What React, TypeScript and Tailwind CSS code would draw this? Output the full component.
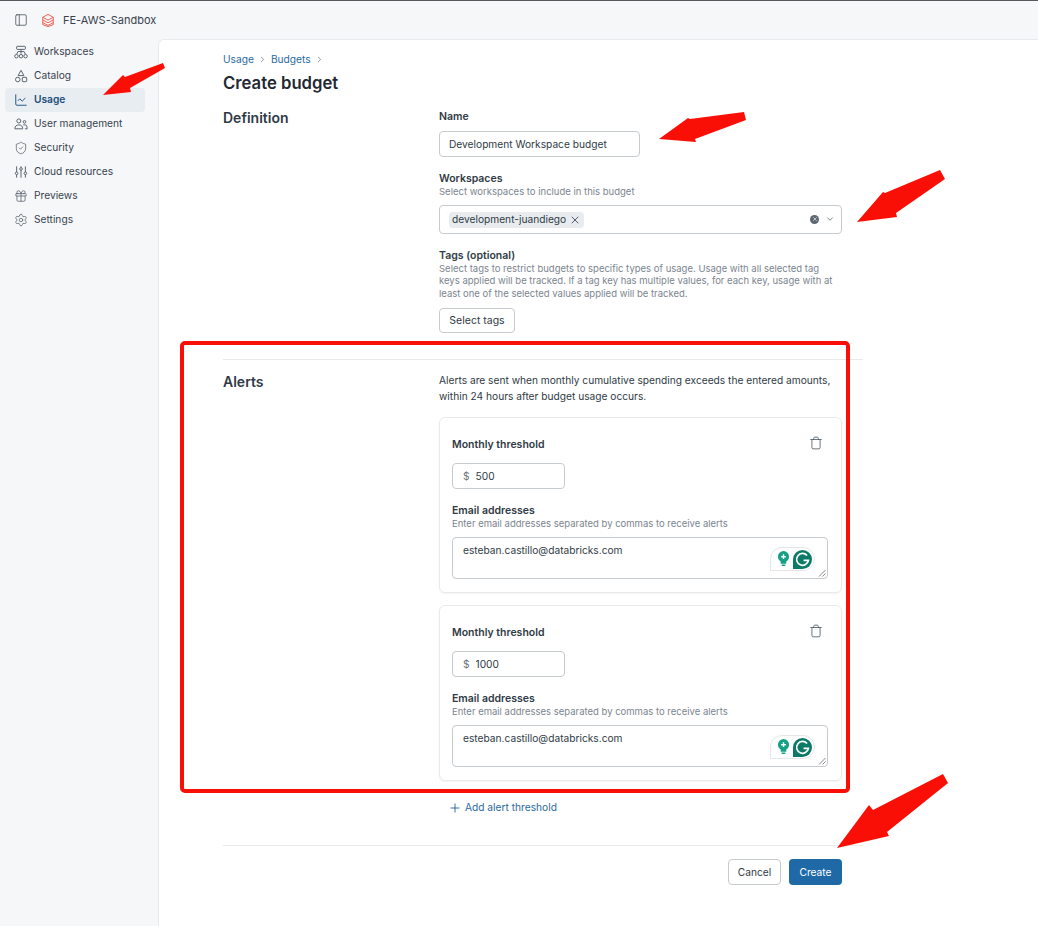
import type { ReactNode } from 'react'
import { ChevronDown, ChevronRight, Gift, LineChart, PanelLeft, Plus, Settings, ShieldCheck, Trash, X } from 'lucide-react'

const ink = 'text-[#2f3a45]'

function WorkspacesIcon() {
  return (
    <svg viewBox="0 0 16 16" className="h-[14px] w-[14px]" fill="none" stroke="currentColor" strokeWidth="1.100">
      <rect x="3" y="1.500" width="10" height="3.500" rx="0.800" />
      <path d="M8 5v5M3 10.500 4.500 7.500h7l1.500 3" />
      <circle cx="2.800" cy="12.800" r="2" />
      <circle cx="8" cy="12.800" r="2" />
      <circle cx="13.200" cy="12.800" r="2" />
    </svg>
  )
}

function CatalogIcon() {
  return (
    <svg viewBox="0 0 16 16" className="h-[14px] w-[14px]" fill="none" stroke="currentColor" strokeWidth="1.100">
      <path d="M8 1.500 11.300 7.500H4.700z" />
      <circle cx="4.300" cy="12" r="2.600" />
      <rect x="9.500" y="9.500" width="5" height="5" rx="0.800" />
    </svg>
  )
}

function UsersIcon() {
  return (
    <svg viewBox="0 0 16 16" className="h-[14px] w-[14px]" fill="none" stroke="currentColor" strokeWidth="1.100">
      <circle cx="5.500" cy="4.500" r="2.300" />
      <circle cx="12" cy="5.500" r="1.500" />
      <path d="M1 13.500c0-3 2-4.500 4.500-4.500S10 10.500 10 13.500zM10.500 9H13c1.300 0 2 1.500 2 4.500h-2.500" />
    </svg>
  )
}

function SlidersIcon() {
  return (
    <svg viewBox="0 0 16 16" className="h-[14px] w-[14px]" fill="none" stroke="currentColor" strokeWidth="1.100">
      <path d="M3 1.500v6.500M3 11v3.500M8 1.500v1.500M8 6v8.500M13 1.500v6.500M13 11v3.500" />
      <circle cx="3" cy="9.500" r="1.500" />
      <circle cx="8" cy="4.500" r="1.500" />
      <circle cx="13" cy="9.500" r="1.500" />
    </svg>
  )
}

function Logo() {
  return (
    <svg viewBox="0 0 16 16" className="h-[15px] w-[14px]" fill="none" stroke="#e8604f" strokeWidth="1.100">
      <path d="M8 1 14 4.300 8 7.500 2 4.300zM2 7.300l6 3.300 6-3.300M2 10.300l6 3.300 6-3.300M2 4.300v8.400L8 15l6-2.300V4.300" />
    </svg>
  )
}

function NavItem({ icon, label, active }: { icon: ReactNode; label: string; active?: boolean }) {
  return (
    <div className={`flex h-6 items-center gap-[6px] rounded px-[9px] text-[10.200px] ${active ? 'bg-[#e8edf2] font-semibold text-[#1d4f7c]' : 'text-[#37424e]'}`}>
      <span className={`flex w-[14px] justify-center ${active ? 'text-[#1d4f7c]' : 'text-[#56616c]'}`}>{icon}</span>
      {label}
    </div>
  )
}

function Field({ label, hint, children }: { label: string; hint?: string; children?: ReactNode }) {
  return (
    <div>
      <div className={`text-[10.500px] leading-[13px] font-semibold ${ink}`}>{label}</div>
      {hint && <div className="mt-[1px] text-[9.500px] leading-[12.500px] text-[#7b858f]">{hint}</div>}
      {children}
    </div>
  )
}

function GrammarlyBadge() {
  return (
    <div className="absolute right-[12px] bottom-[7px] flex h-[24px] w-[45px] items-center gap-[3px] rounded-t-[12px] rounded-br-[12px] border border-[#e3e7ea] bg-white pl-[6px]">
      <svg viewBox="0 0 14 17" className="h-[16px] w-[13px]">
        <circle cx="7" cy="6" r="6" fill="#15a085" />
        <path d="M4 10h6v3.500H4zM5 14.500h4V16H5z" fill="#15a085" />
        <path d="M7 3.500v5M4.500 6h5" stroke="#fff" strokeWidth="1.500" />
      </svg>
      <svg viewBox="0 0 18 18" className="h-[19px] w-[19px]">
        <path d="M9 0a9 9 0 0 1 0 18H0V9a9 9 0 0 1 9-9z" fill="#0b7a66" />
        <path d="M13.300 5.200A5.600 5.600 0 1 0 14.600 9.800H10" fill="none" stroke="#fff" strokeWidth="1.600" />
      </svg>
    </div>
  )
}

function AlertCard({ amount }: { amount: string }) {
  return (
    <div className="rounded-md border border-[#e8ebee] bg-white pt-[19px] pr-[13px] pb-[13px] pl-[12px] shadow-[0_1px_2px_rgba(0,0,0,0.05)]">
      <div className="flex h-[15.500px] items-center justify-between">
        <div className={`text-[10.500px] font-semibold ${ink}`}>Monthly threshold</div>
        <Trash size={14} strokeWidth={1.400} className="mr-[5px] -mt-[4px] text-[#4c5763]" />
      </div>
      <div className={`mt-[10px] flex h-[26px] w-[113px] items-center gap-[6px] rounded border border-[#c6cbd0] px-[10px] pt-[2px] text-[10.200px] ${ink}`}>
        <span className="text-[#6b7580]">$</span>
        {amount}
      </div>
      <div className="mt-[15px]">
        <Field label="Email addresses" hint="Enter email addresses separated by commas to receive alerts">
          <div className={`relative mt-[7px] h-[42px] rounded border border-[#c6cbd0] px-[10px] pt-[5px] text-[10.200px] leading-[14px] ${ink}`}>
            esteban.castillo@databricks.com
            <GrammarlyBadge />
            <svg viewBox="0 0 8 8" className="absolute right-[1px] bottom-[1px] h-[8px] w-[8px]" stroke="#555" strokeWidth="0.700">
              <path d="M1 7.500 7.500 1M4.500 7.500l3-3" />
            </svg>
          </div>
        </Field>
      </div>
    </div>
  )
}

export default function App() {
  return (
    <div className="relative h-[926px] w-[1038px] overflow-hidden bg-[#f6f7f9] font-['Inter',sans-serif]">
      <div className="h-px bg-[#55595e]" />
      <div className="flex h-[38px] items-center pl-[14px] text-[#37424e]">
        <PanelLeft size={14} strokeWidth={1.300} className="text-[#3f4a55]" />
        <span className="ml-[13px]"><Logo /></span>
        <span className="ml-[8px] text-[11px]">FE-AWS-Sandbox</span>
      </div>
      <div className="flex h-[887px]">
        <nav className="flex w-[158px] shrink-0 flex-col pt-[1px] pr-[13px] pl-[5px]">
          <NavItem icon={<WorkspacesIcon />} label="Workspaces" />
          <NavItem icon={<CatalogIcon />} label="Catalog" />
          <NavItem icon={<LineChart size={14} strokeWidth={1.600} />} label="Usage" active />
          <NavItem icon={<UsersIcon />} label="User management" />
          <NavItem icon={<ShieldCheck size={14} strokeWidth={1.300} />} label="Security" />
          <NavItem icon={<SlidersIcon />} label="Cloud resources" />
          <NavItem icon={<Gift size={14} strokeWidth={1.300} />} label="Previews" />
          <NavItem icon={<Settings size={14} strokeWidth={1.300} />} label="Settings" />
        </nav>
        <main className="flex-1 rounded-tl-md border-t border-l border-[#e8ebee] bg-white pt-[12px] pl-[64px]">
          <div className="flex items-center gap-[4px] text-[10.200px] leading-[14px] text-[#2a6a9e]">
            Usage
            <ChevronRight size={9} className="text-[#6b7580]" />
            Budgets
            <ChevronRight size={9} className="text-[#6b7580]" />
          </div>
          <h1 className="mt-[6px] text-[16.700px] leading-[22px] font-semibold text-[#1f2933]">Create budget</h1>

          <div className="w-[640px]">
            <section className="mt-[15px] flex border-b border-[#e8ebee] pb-[26px]">
              <h2 className={`w-[216px] shrink-0 text-[14px] leading-[18px] font-semibold ${ink}`}>Definition</h2>
              <div className="w-[403px] pt-[1px]">
                <Field label="Name">
                  <div className={`mt-[8px] flex h-[26px] w-[201px] items-center rounded border border-[#c6cbd0] px-[9px] pt-[2px] text-[10.200px] ${ink}`}>
                    Development Workspace budget
                  </div>
                </Field>
                <div className="mt-[15px]">
                  <Field label="Workspaces" hint="Select workspaces to include in this budget">
                    <div className="mt-[6px] flex h-[29px] items-center rounded border border-[#c6cbd0] pr-[6px] pl-[9px]">
                      <span className={`mt-[1px] flex h-[16px] items-center gap-[3px] rounded-sm bg-[#e8ecef] px-[3px] text-[10.200px] ${ink}`}>
                        development-juandiego
                        <X size={12} strokeWidth={1.600} />
                      </span>
                      <span className="ml-auto flex h-[9px] w-[9px] items-center justify-center rounded-full bg-[#5d6873]">
                        <X size={6} strokeWidth={2.500} className="text-white" />
                      </span>
                      <ChevronDown size={10} className="ml-[6px] text-[#5d6873]" />
                    </div>
                  </Field>
                </div>
                <div className="mt-[15px]">
                  <Field label="Tags (optional)" hint="Select tags to restrict budgets to specific types of usage. Usage with all selected tag keys applied will be tracked. If a tag key has multiple values, for each key, usage with at least one of the selected values applied will be tracked." />
                </div>
                <button className={`mt-[8px] flex h-[25px] w-[76px] items-center justify-center rounded border border-[#c6cbd0] text-[10.500px] ${ink}`}>
                  Select tags
                </button>
              </div>
            </section>

            <section className="flex border-b border-[#e8ebee] pt-[13px] pb-[30px]">
              <h2 className={`w-[216px] shrink-0 text-[14px] leading-[18px] font-semibold ${ink}`}>Alerts</h2>
              <div className="w-[403px]">
                <p className={`-mt-[1px] text-[10.200px] leading-[16px] ${ink}`}>
                  Alerts are sent when monthly cumulative spending exceeds the entered amounts, within 24 hours after budget usage occurs.
                </p>
                <div className="mt-[13px] flex flex-col gap-[12px]">
                  <AlertCard amount="500" />
                  <AlertCard amount="1000" />
                </div>
                <div className="mt-[19px] flex items-center gap-[3px] pl-[9px] text-[10.200px] text-[#2a6a9e]">
                  <Plus size={14} strokeWidth={1.500} className="text-[#1f5f96]" />
                  Add alert threshold
                </div>
              </div>
            </section>

            <div className="mt-[13px] flex w-[619px] justify-end gap-[8px]">
              <button className={`h-[26px] w-[53px] rounded border border-[#c6cbd0] text-[10.200px] ${ink}`}>Cancel</button>
              <button className="h-[26px] w-[53px] rounded bg-[#1f69a6] text-[10.200px] text-white">Create</button>
            </div>
          </div>
        </main>
      </div>

      {/* annotations drawn over the page */}
      <div className="pointer-events-none absolute top-[341px] left-[180px] h-[452px] w-[670px] rounded-[5px] border-[4px] border-[#fa0f06]" />
      <svg viewBox="0 0 1038 926" className="pointer-events-none absolute inset-0 h-[926px] w-[1038px]" fill="#fa0f06">
        <polygon points="103,95 123,75 125,77 163,63 165,68 130,88 131,92" />
        <polygon points="659,139 688,118 690,119 744,112 746,120 695,139 696,142" />
        <polygon points="857,222 883,192 885,193 940,170 945,179 896,213 897,217" />
        <polygon points="837,848 869,805 873,810 943,774 948,783 887,832 889,836" />
      </svg>
    </div>
  )
}
